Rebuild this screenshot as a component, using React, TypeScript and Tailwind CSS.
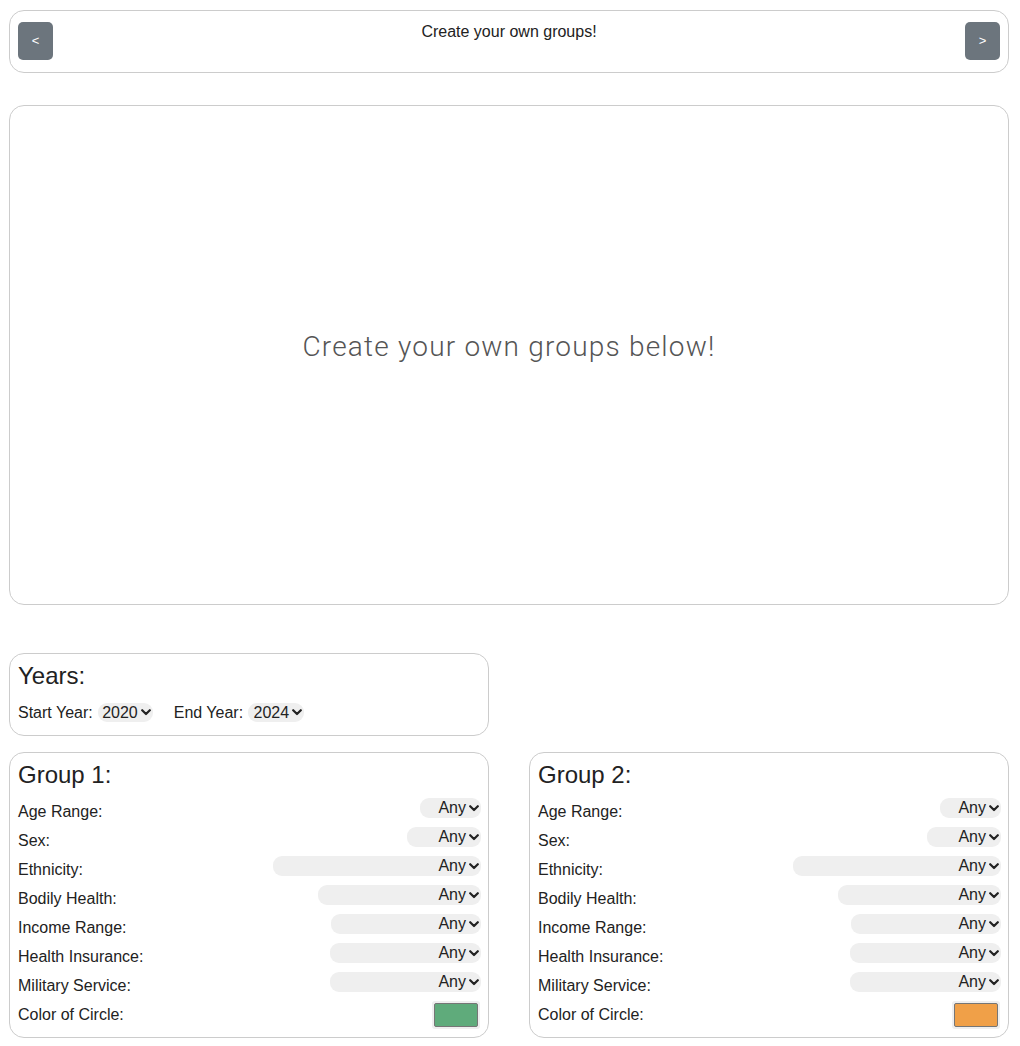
import React from "react";

const Chevron = () => (
  <svg width="10" height="7" viewBox="0 0 10 7" className="shrink-0">
    <path d="M1.2 1.2 L5 5 L8.8 1.2" fill="none" stroke="#222" strokeWidth="2.2" strokeLinecap="round" strokeLinejoin="round" />
  </svg>
);

const Select = ({ value, w }: { value: string; w: string }) => (
  <div className={`${w} h-[20px] bg-[#efefef] rounded-[9px] flex items-center justify-end gap-[3px] pr-[2px] pl-[3px] text-[16px] leading-[18px] text-[#222]`}>
    <span>{value}</span>
    <Chevron />
  </div>
);

const rows: { label: string; w: string }[] = [
  { label: "Age Range:", w: "w-[61px]" },
  { label: "Sex:", w: "w-[74px]" },
  { label: "Ethnicity:", w: "w-[208px]" },
  { label: "Bodily Health:", w: "w-[163px]" },
  { label: "Income Range:", w: "w-[150px]" },
  { label: "Health Insurance:", w: "w-[151px]" },
  { label: "Military Service:", w: "w-[151px]" },
];

const GroupCard = ({ title, color }: { title: string; color: string }) => (
  <div className="w-[480px] h-[286px] border border-[#cccccc] rounded-[15px] pl-[8px] pr-[7px] pt-[8px]">
    <div className="text-[24px] leading-[28px] text-[#222]">{title}</div>
    <div className="mt-[8px] flex flex-col">
      {rows.map((r) => (
        <div key={r.label} className="h-[29px] flex justify-between items-start">
          <div className="mt-[6px] text-[16px] leading-[18px] text-[#222]">{r.label}</div>
          <div className="mt-[1px]">
            <Select value="Any" w={r.w} />
          </div>
        </div>
      ))}
      <div className="h-[29px] flex justify-between items-start">
        <div className="mt-[6px] text-[16px] leading-[18px] text-[#222]">Color of Circle:</div>
        <div className="mt-[1px] mr-[1px] w-[48px] h-[28px] bg-[#efefef] rounded-[3px] p-[2px]">
          <div className={`w-full h-full border border-[#767676] rounded-[2px] ${color}`} />
        </div>
      </div>
    </div>
  </div>
);

export default function App() {
  return (
    <div className="bg-white min-h-[1046px] pl-[9px] pt-[10px]" style={{ fontFamily: '"Liberation Sans", Arial, sans-serif' }}>
      <div className="w-[1000px]">
        <div className="h-[63px] border border-[#cccccc] rounded-[15px] px-[8px] pt-[11px] flex justify-between items-start">
          <div className="w-[35px] h-[38px] bg-[#6c757d] rounded-[5px] flex items-center justify-center text-white text-[13px]">&lt;</div>
          <div className="mt-[1px] text-[16px] leading-[18px] text-[#222]">Create your own groups!</div>
          <div className="w-[35px] h-[38px] bg-[#6c757d] rounded-[5px] flex items-center justify-center text-white text-[13px]">&gt;</div>
        </div>

        <div className="mt-[32px] h-[500px] border border-[#cccccc] rounded-[15px] flex items-center justify-center pb-[17px]">
          <div className="text-[28px] leading-[34px] text-[#555] font-light tracking-[1.2px]" style={{ fontFamily: 'Roboto, "Liberation Sans", sans-serif' }}>
            Create your own groups below!
          </div>
        </div>

        <div className="mt-[48px] w-[480px] h-[83px] border border-[#cccccc] rounded-[15px] pl-[8px] pt-[8px]">
          <div className="text-[24px] leading-[28px] text-[#222]">Years:</div>
          <div className="mt-[13px] flex items-center text-[16px] leading-[18px] text-[#222]">
            <span>Start Year:</span>
            <div className="ml-[5px]">
              <div className="w-[55px] h-[19px] bg-[#efefef] rounded-[9px] flex items-center justify-end gap-[3px] pr-[2px] text-[16px] leading-[18px]">
                <span>2020</span>
                <Chevron />
              </div>
            </div>
            <span className="ml-[21px]">End Year:</span>
            <div className="ml-[5px]">
              <div className="w-[56px] h-[19px] bg-[#efefef] rounded-[9px] flex items-center justify-end gap-[3px] pr-[2px] text-[16px] leading-[18px]">
                <span>2024</span>
                <Chevron />
              </div>
            </div>
          </div>
        </div>

        <div className="mt-[16px] flex gap-[40px]">
          <GroupCard title="Group 1:" color="bg-[#5fab7b]" />
          <GroupCard title="Group 2:" color="bg-[#f0a048]" />
        </div>
      </div>
    </div>
  );
}
